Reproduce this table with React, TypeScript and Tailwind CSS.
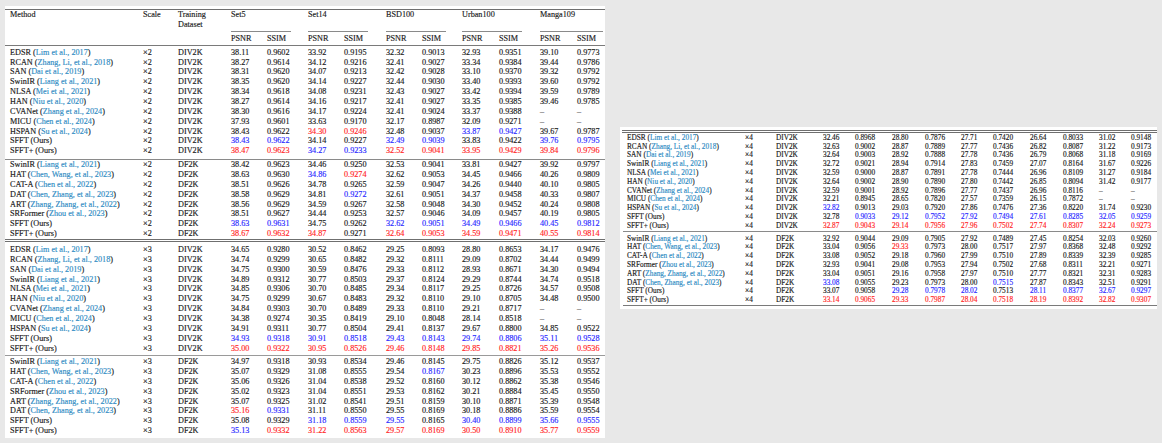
import React from 'react';

type Row = [string, string, string];

// values: Set5 P/S, Set14 P/S, BSD100 P/S, Urban100 P/S, Manga109 P/S ; suffix b = blue, r = red
const X2_DIV: Row[] = [
  ['EDSR', 'Lim et al., 2017', '38.11 0.9602 33.92 0.9195 32.32 0.9013 32.93 0.9351 39.10 0.9773'],
  ['RCAN', 'Zhang, Li, et al., 2018', '38.27 0.9614 34.12 0.9216 32.41 0.9027 33.34 0.9384 39.44 0.9786'],
  ['SAN', 'Dai et al., 2019', '38.31 0.9620 34.07 0.9213 32.42 0.9028 33.10 0.9370 39.32 0.9792'],
  ['SwinIR', 'Liang et al., 2021', '38.35 0.9620 34.14 0.9227 32.44 0.9030 33.40 0.9393 39.60 0.9792'],
  ['NLSA', 'Mei et al., 2021', '38.34 0.9618 34.08 0.9231 32.43 0.9027 33.42 0.9394 39.59 0.9789'],
  ['HAN', 'Niu et al., 2020', '38.27 0.9614 34.16 0.9217 32.41 0.9027 33.35 0.9385 39.46 0.9785'],
  ['CVANet', 'Zhang et al., 2024', '38.30 0.9616 34.17 0.9224 32.41 0.9024 33.37 0.9388 – –'],
  ['MICU', 'Chen et al., 2024', '37.93 0.9601 33.63 0.9170 32.17 0.8987 32.09 0.9271 – –'],
  ['HSPAN', 'Su et al., 2024', '38.43 0.9622 34.30r 0.9246r 32.48 0.9037 33.87b 0.9427b 39.67 0.9787'],
  ['SFFT (Ours)', '', '38.43b 0.9622b 34.14 0.9227 32.49b 0.9039b 33.83 0.9422 39.76b 0.9795b'],
  ['SFFT+ (Ours)', '', '38.47r 0.9623r 34.27b 0.9233b 32.52r 0.9041r 33.95r 0.9429r 39.84r 0.9796r'],
];

const X2_DF: Row[] = [
  ['SwinIR', 'Liang et al., 2021', '38.42 0.9623 34.46 0.9250 32.53 0.9041 33.81 0.9427 39.92 0.9797'],
  ['HAT', 'Chen, Wang, et al., 2023', '38.63 0.9630 34.86b 0.9274r 32.62 0.9053 34.45 0.9466 40.26 0.9809'],
  ['CAT-A', 'Chen et al., 2022', '38.51 0.9626 34.78 0.9265 32.59 0.9047 34.26 0.9440 40.10 0.9805'],
  ['DAT', 'Chen, Zhang, et al., 2023', '38.58 0.9629 34.81 0.9272b 32.61 0.9051 34.37 0.9458 40.33 0.9807'],
  ['ART', 'Zhang, Zhang, et al., 2022', '38.56 0.9629 34.59 0.9267 32.58 0.9048 34.30 0.9452 40.24 0.9808'],
  ['SRFormer', 'Zhou et al., 2023', '38.51 0.9627 34.44 0.9253 32.57 0.9046 34.09 0.9457 40.19 0.9805'],
  ['SFFT (Ours)', '', '38.63b 0.9631b 34.75 0.9262 32.62b 0.9051b 34.49b 0.9466b 40.45b 0.9812b'],
  ['SFFT+ (Ours)', '', '38.67r 0.9632r 34.87r 0.9271 32.64r 0.9053r 34.59r 0.9471r 40.55r 0.9814r'],
];

const X3_DIV: Row[] = [
  ['EDSR', 'Lim et al., 2017', '34.65 0.9280 30.52 0.8462 29.25 0.8093 28.80 0.8653 34.17 0.9476'],
  ['RCAN', 'Zhang, Li, et al., 2018', '34.74 0.9299 30.65 0.8482 29.32 0.8111 29.09 0.8702 34.44 0.9499'],
  ['SAN', 'Dai et al., 2019', '34.75 0.9300 30.59 0.8476 29.33 0.8112 28.93 0.8671 34.30 0.9494'],
  ['SwinIR', 'Liang et al., 2021', '34.89 0.9312 30.77 0.8503 29.37 0.8124 29.29 0.8744 34.74 0.9518'],
  ['NLSA', 'Mei et al., 2021', '34.85 0.9306 30.70 0.8485 29.34 0.8117 29.25 0.8726 34.57 0.9508'],
  ['HAN', 'Niu et al., 2020', '34.75 0.9299 30.67 0.8483 29.32 0.8110 29.10 0.8705 34.48 0.9500'],
  ['CVANet', 'Zhang et al., 2024', '34.84 0.9303 30.70 0.8489 29.33 0.8110 29.21 0.8717 – –'],
  ['MICU', 'Chen et al., 2024', '34.38 0.9274 30.35 0.8419 29.10 0.8048 28.14 0.8518 – –'],
  ['HSPAN', 'Su et al., 2024', '34.91 0.9311 30.77 0.8504 29.41 0.8137 29.67 0.8800 34.85 0.9522'],
  ['SFFT (Ours)', '', '34.93b 0.9318b 30.91b 0.8518b 29.43b 0.8143b 29.74b 0.8806b 35.11b 0.9528b'],
  ['SFFT+ (Ours)', '', '35.00r 0.9322r 30.95r 0.8526r 29.46r 0.8148r 29.85r 0.8821r 35.26r 0.9536r'],
];

const X3_DF: Row[] = [
  ['SwinIR', 'Liang et al., 2021', '34.97 0.9318 30.93 0.8534 29.46 0.8145 29.75 0.8826 35.12 0.9537'],
  ['HAT', 'Chen, Wang, et al., 2023', '35.07 0.9329 31.08 0.8555 29.54 0.8167b 30.23 0.8896 35.53 0.9552'],
  ['CAT-A', 'Chen et al., 2022', '35.06 0.9326 31.04 0.8538 29.52 0.8160 30.12 0.8862 35.38 0.9546'],
  ['SRFormer', 'Zhou et al., 2023', '35.02 0.9323 31.04 0.8551 29.53 0.8162 30.21 0.8884 35.45 0.9550'],
  ['ART', 'Zhang, Zhang, et al., 2022', '35.07 0.9325 31.02 0.8541 29.51 0.8159 30.10 0.8871 35.39 0.9548'],
  ['DAT', 'Chen, Zhang, et al., 2023', '35.16r 0.9331b 31.11 0.8550 29.55 0.8169 30.18 0.8886 35.59 0.9554'],
  ['SFFT (Ours)', '', '35.08 0.9329 31.18b 0.8559b 29.55b 0.8165 30.40b 0.8899b 35.66b 0.9555b'],
  ['SFFT+ (Ours)', '', '35.13b 0.9332r 31.22r 0.8563r 29.57r 0.8169r 30.50r 0.8910r 35.77r 0.9559r'],
];

const X4_DIV: Row[] = [
  ['EDSR', 'Lim et al., 2017', '32.46 0.8968 28.80 0.7876 27.71 0.7420 26.64 0.8033 31.02 0.9148'],
  ['RCAN', 'Zhang, Li, et al., 2018', '32.63 0.9002 28.87 0.7889 27.77 0.7436 26.82 0.8087 31.22 0.9173'],
  ['SAN', 'Dai et al., 2019', '32.64 0.9003 28.92 0.7888 27.78 0.7436 26.79 0.8068 31.18 0.9169'],
  ['SwinIR', 'Liang et al., 2021', '32.72 0.9021 28.94 0.7914 27.83 0.7459 27.07 0.8164 31.67 0.9226'],
  ['NLSA', 'Mei et al., 2021', '32.59 0.9000 28.87 0.7891 27.78 0.7444 26.96 0.8109 31.27 0.9184'],
  ['HAN', 'Niu et al., 2020', '32.64 0.9002 28.90 0.7890 27.80 0.7442 26.85 0.8094 31.42 0.9177'],
  ['CVANet', 'Zhang et al., 2024', '32.59 0.9001 28.92 0.7896 27.77 0.7437 26.96 0.8116 – –'],
  ['MICU', 'Chen et al., 2024', '32.21 0.8945 28.65 0.7820 27.57 0.7359 26.15 0.7872 – –'],
  ['HSPAN', 'Su et al., 2024', '32.82b 0.9013 29.03 0.7920 27.86 0.7476 27.36 0.8220 31.74 0.9230'],
  ['SFFT (Ours)', '', '32.78 0.9033b 29.12b 0.7952b 27.92b 0.7494b 27.61b 0.8285b 32.05b 0.9259b'],
  ['SFFT+ (Ours)', '', '32.87r 0.9043r 29.14r 0.7956r 27.96r 0.7502r 27.74r 0.8307r 32.24r 0.9273r'],
];

const X4_DF: Row[] = [
  ['SwinIR', 'Liang et al., 2021', '32.92 0.9044 29.09 0.7905 27.92 0.7489 27.45 0.8254 32.03 0.9260'],
  ['HAT', 'Chen, Wang, et al., 2023', '33.04 0.9056 29.33r 0.7973 28.00 0.7517 27.97 0.8368 32.48 0.9292'],
  ['CAT-A', 'Chen et al., 2022', '33.08 0.9052 29.18 0.7960 27.99 0.7510 27.89 0.8339 32.39 0.9285'],
  ['SRFormer', 'Zhou et al., 2023', '32.93 0.9041 29.08 0.7953 27.94 0.7502 27.68 0.8311 32.21 0.9271'],
  ['ART', 'Zhang, Zhang, et al., 2022', '33.04 0.9051 29.16 0.7958 27.97 0.7510 27.77 0.8321 32.31 0.9283'],
  ['DAT', 'Chen, Zhang, et al., 2023', '33.08b 0.9055 29.23 0.7973 28.00 0.7515b 27.87 0.8343 32.51 0.9291'],
  ['SFFT (Ours)', '', '33.07 0.9058 29.28b 0.7978b 28.02b 0.7513 28.11b 0.8377b 32.67b 0.9297b'],
  ['SFFT+ (Ours)', '', '33.14r 0.9065r 29.33r 0.7987r 28.04r 0.7518r 28.19r 0.8392r 32.82r 0.9307r'],
];

const LEFT_COLS =
  'grid grid-cols-[133px_35px_53px_36px_41px_36px_42px_36px_40px_37px_41px_37px_28px] pl-[5px]';
const RIGHT_COLS =
  'grid grid-cols-[118px_31px_47px_32px_37px_33px_36px_32px_37px_33px_36px_32px_26px] pl-[7px]';

const Value = ({ token }: { token: string }) => {
  const mark = token.slice(-1);
  if (mark === 'b') return <span className="text-[#2a2aff]">{token.slice(0, -1)}</span>;
  if (mark === 'r') return <span className="text-[#ff2626]">{token.slice(0, -1)}</span>;
  return <span>{token}</span>;
};

const Group = ({
  rows,
  scale,
  dataset,
  small,
}: {
  rows: Row[];
  scale: string;
  dataset: string;
  small?: boolean;
}) => (
  <div>
    {rows.map(([name, cite, values]) => (
      <div
        key={name + cite}
        className={
          small
            ? `${RIGHT_COLS} h-[8.8px] leading-[8.8px] whitespace-nowrap`
            : `${LEFT_COLS} h-[9.87px] leading-[9.87px] whitespace-nowrap`
        }
      >
        <div>
          {name}
          {cite && (
            <>
              {' ('}
              <span className="text-[#2f8cc4]">{cite}</span>
              {')'}
            </>
          )}
        </div>
        <div>×{scale}</div>
        <div>{dataset}</div>
        {values.split(' ').map((v, i) => (
          <div key={i}>
            <Value token={v} />
          </div>
        ))}
      </div>
    ))}
  </div>
);

const DATASETS = ['Set5', 'Set14', 'BSD100', 'Urban100', 'Manga109'];

const Header = () => (
  <div className={`${LEFT_COLS} grid-rows-[22px_13px] leading-[10px]`}>
    <div className="row-span-2">Method</div>
    <div className="row-span-2">Scale</div>
    <div className="row-span-2">
      Training
      <br />
      Dataset
    </div>
    {DATASETS.map((d) => (
      <div key={d} className="col-span-2 flex flex-col justify-between">
        <span>{d}</span>
        <div className={d === 'Manga109' ? 'h-px w-[63px] bg-[#8a8a8a]' : 'h-px w-[60px] bg-[#8a8a8a]'} />
      </div>
    ))}
    {DATASETS.map((d) => (
      <React.Fragment key={d + 'm'}>
        <div className="leading-[13px]">PSNR</div>
        <div className="leading-[13px]">SSIM</div>
      </React.Fragment>
    ))}
  </div>
);

export default function App() {
  return (
    <div className="w-[1162px] h-[443px] overflow-hidden bg-[#e8e8e8] flex items-start font-['Liberation_Serif',serif] text-[#1a1a1a] [-webkit-text-stroke:0.15px]">
      {/* ×2 and ×3 results */}
      <div className="ml-[5px] mt-[6px] w-[600px] h-[432px] bg-white text-[8.2px] pt-[3px]">
        <div className="h-[1.3px] bg-[#6f6f6f]" />
        <Header />
        <div className="h-px bg-[#7a7a7a]" />
        <div className="h-[1.4px]" />
        <Group rows={X2_DIV} scale="2" dataset="DIV2K" />
        <div className="h-[3px]" />
        <div className="h-px bg-[#8a8a8a]" />
        <Group rows={X2_DF} scale="2" dataset="DF2K" />
        <div className="h-px bg-[#6f6f6f]" />
        <div className="h-px" />
        <div className="h-px bg-[#6f6f6f]" />
        <div className="h-[3px]" />
        <Group rows={X3_DIV} scale="3" dataset="DIV2K" />
        <div className="h-[1.4px]" />
        <div className="h-[1.5px] bg-[#9a9a9a]" />
        <div className="h-[0.8px]" />
        <Group rows={X3_DF} scale="3" dataset="DF2K" />
      </div>

      {/* ×4 results */}
      <div className="ml-[15px] mt-[127px] w-[537px] h-[182px] bg-white text-[7.3px] pt-[3px]">
        <div className="ml-[2px] h-px bg-[#6f6f6f]" />
        <div className="h-[1.3px]" />
        <div className="ml-[2px] h-px bg-[#6f6f6f]" />
        <div className="h-[0.6px]" />
        <Group rows={X4_DIV} scale="4" dataset="DIV2K" small />
        <div className="h-[0.5px]" />
        <div className="ml-[3px] h-px bg-[#8a8a8a]" />
        <div className="h-[2.4px]" />
        <Group rows={X4_DF} scale="4" dataset="DF2K" small />
        <div className="h-[0.3px]" />
        <div className="ml-[3px] h-px bg-[#7a7a7a]" />
      </div>
    </div>
  );
}
